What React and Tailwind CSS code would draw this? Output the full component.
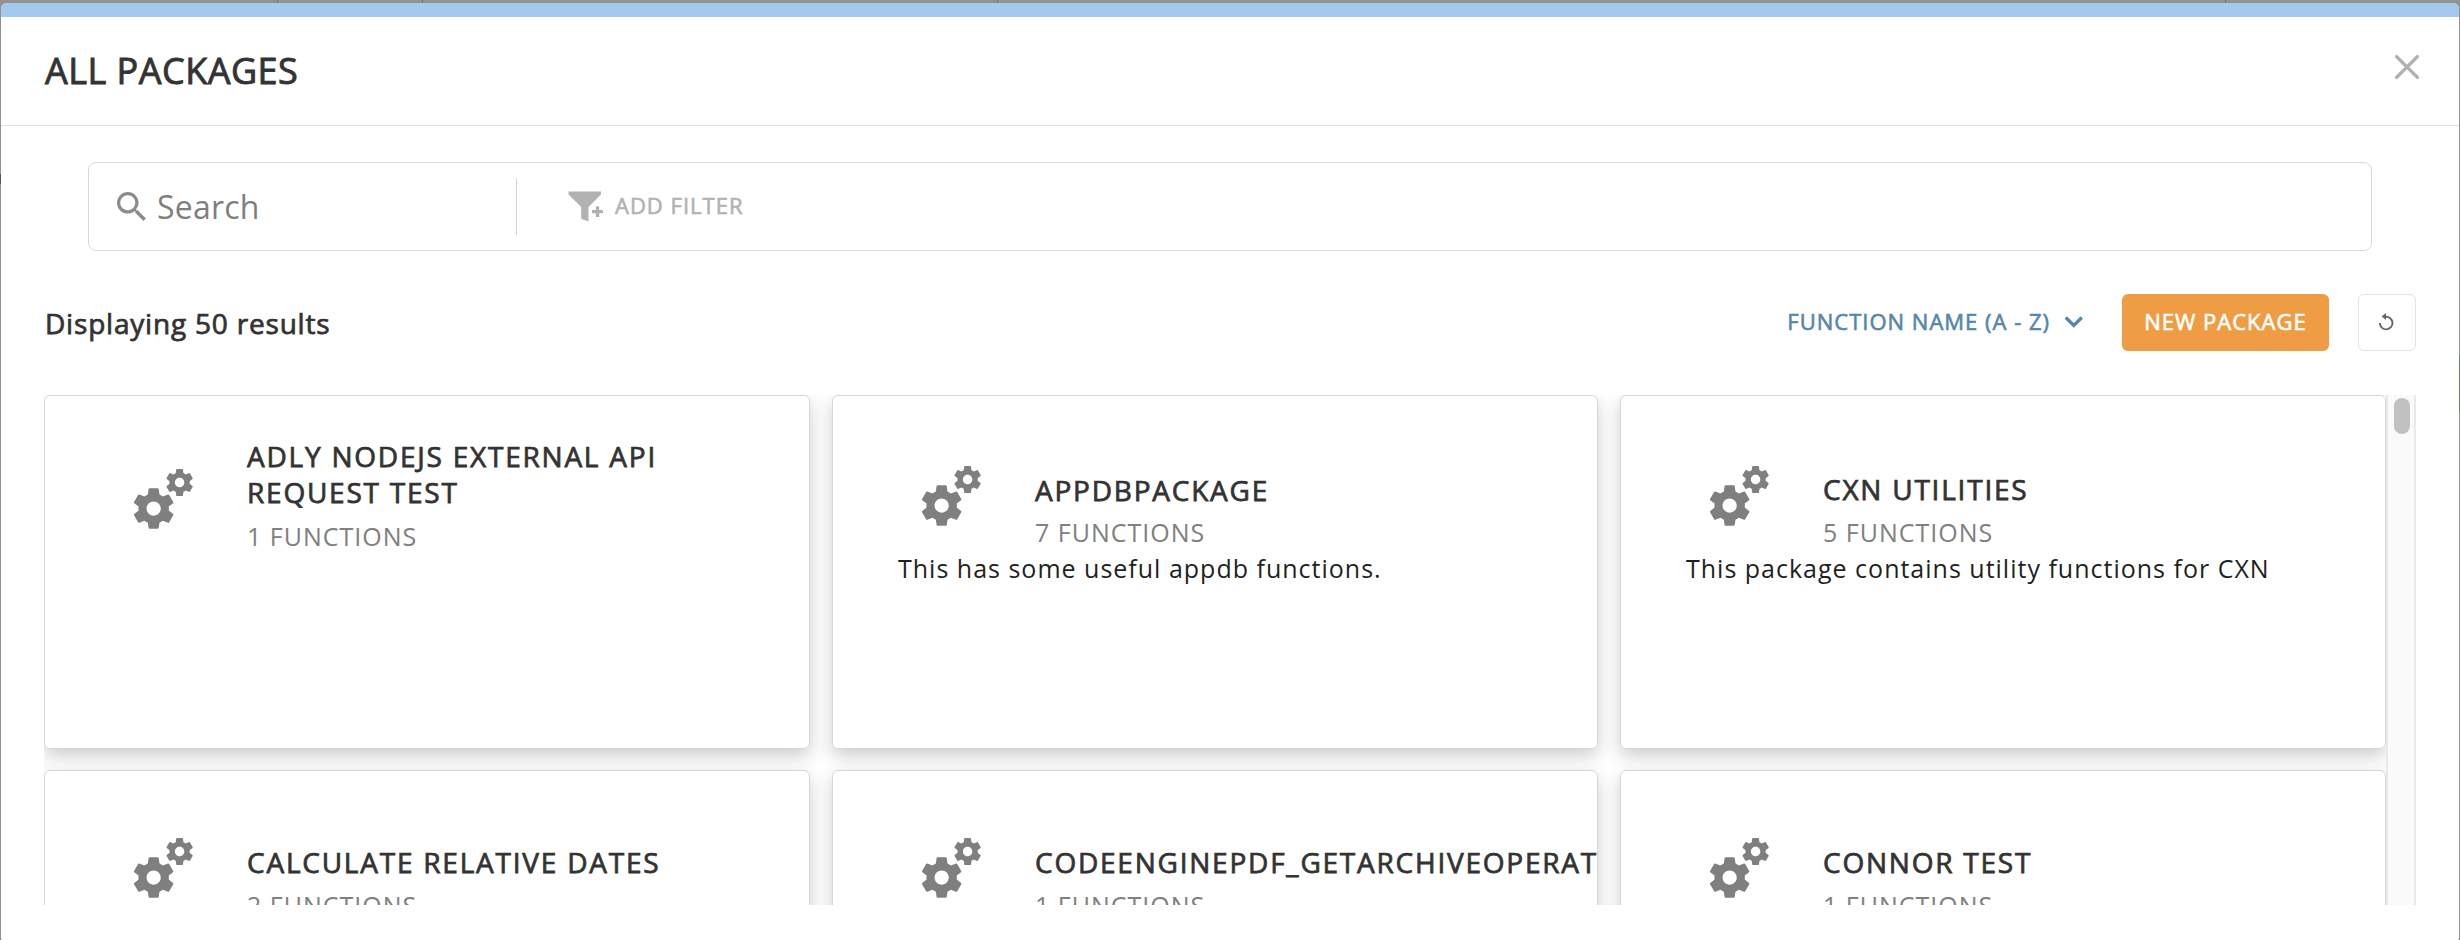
import React from "react";

const GEAR =
  "M19.43 12.98c.04-.32.07-.64.07-.98s-.03-.66-.07-.98l2.11-1.65c.19-.15.24-.42.12-.64l-2-3.46c-.12-.22-.39-.3-.61-.22l-2.49 1c-.52-.4-1.08-.73-1.69-.98l-.38-2.65C14.46 2.18 14.25 2 14 2h-4c-.25 0-.46.18-.49.42l-.38 2.65c-.61.25-1.17.59-1.69.98l-2.49-1c-.23-.09-.49 0-.61.22l-2 3.46c-.13.22-.07.49.12.64l2.11 1.65c-.04.32-.07.65-.07.98s.03.66.07.98l-2.11 1.65c-.19.15-.24.42-.12.64l2 3.46c.12.22.39.3.61.22l2.49-1c.52.4 1.08.73 1.69.98l.38 2.65c.03.24.24.42.49.42h4c.25 0 .46-.18.49-.42l.38-2.65c.61-.25 1.17-.59 1.69-.98l2.49 1c.23.09.49 0 .61-.22l2-3.46c.12-.22.07-.49-.12-.64l-2.11-1.65zM12 15.5c-1.93 0-3.5-1.57-3.5-3.5s1.57-3.5 3.5-3.5 3.5 1.57 3.5 3.5-1.57 3.5-3.5 3.5z";

const packages = [
  { name: "ADLY NODEJS EXTERNAL API REQUEST TEST", count: 1, icon: "pt-[73px]", text: "pt-[42px]", fn: "mt-[8px]" },
  { name: "APPDBPACKAGE", count: 7, desc: "This has some useful appdb functions.", icon: "pt-[70px]", text: "pt-[76px]", fn: "mt-[6px]" },
  { name: "CXN UTILITIES", count: 5, desc: "This package contains utility functions for CXN", icon: "pt-[70px]", text: "pt-[75px]", fn: "mt-[7px]" },
  { name: "CALCULATE RELATIVE DATES", count: 2, icon: "pt-[67px]", text: "pt-[73px]", fn: "mt-[7px]" },
  { name: "CODEENGINEPDF_GETARCHIVEOPERATIONS", count: 1, icon: "pt-[67px]", text: "pt-[73px]", fn: "mt-[7px]" },
  { name: "CONNOR TEST", count: 1, icon: "pt-[67px]", text: "pt-[73px]", fn: "mt-[7px]" },
];

function Gears() {
  return (
    <svg width="62" height="62" viewBox="0 0 62 62" className="block shrink-0 fill-[#7f7f7f]">
      <path d={GEAR} transform="translate(-3.7 15.2) scale(2.03)" />
      <path d={GEAR} transform="translate(30.4 -2.7) scale(1.35)" />
    </svg>
  );
}

function Card({ p }) {
  return (
    <div className="h-[354px] overflow-hidden rounded-md border border-[#d6d6d6] bg-white">
      <div className="flex pl-[88px]">
        <div className={"w-[114px] shrink-0 " + p.icon}>
          <Gears />
        </div>
        <div className={"min-w-0 grow " + p.text}>
          <div className="w-[480px] text-[28px] leading-[36px] tracking-[1.77px] text-[#333] [-webkit-text-stroke:0.75px_#333]">{p.name}</div>
          <div className={"text-[25px] leading-[36px] tracking-[1px] text-[#808080] " + p.fn}>{p.count} FUNCTIONS</div>
        </div>
      </div>
      {p.desc && <div className="pl-[65px] text-[25px] leading-[36px] tracking-[1px] text-[#1f1f1f]">{p.desc}</div>}
    </div>
  );
}

function Header() {
  return (
    <div className="flex h-[109px] items-center justify-between border-b border-[#e0e0e0] pr-[39px] pl-[44px]">
      <h1 className="text-[36px] leading-[48px] tracking-[0.48px] text-[#333] [-webkit-text-stroke:0.9px_#333]">ALL PACKAGES</h1>
      <svg width="26" height="26" viewBox="0 0 26 26" className="mb-[8px]">
        <path d="M2.6 2.6 23.4 23.4M23.4 2.6 2.6 23.4" stroke="#b0b0b0" strokeWidth="3.4" strokeLinecap="round" />
      </svg>
    </div>
  );
}

function SearchBar() {
  return (
    <div className="mx-[87px] mt-[36px] flex h-[89px] items-center rounded-lg border border-[#d9d9d9]">
      <div className="flex h-[57px] w-[428px] items-center border-r border-[#d2d2d2] pl-[28px]">
        <svg width="29" height="29" viewBox="3 3 17.5 17.5" className="fill-[#8c8c8c]">
          <path d="M15.5 14h-.79l-.28-.27A6.471 6.471 0 0 0 16 9.5 6.5 6.5 0 1 0 9.5 16c1.61 0 3.09-.59 4.23-1.57l.27.28v.79l5 4.99L20.49 19l-4.99-5zm-6 0C7.01 14 5 11.99 5 9.5S7.01 5 9.5 5 14 7.01 14 9.5 11.99 14 9.5 14z" />
        </svg>
        <span className="ml-[11px] text-[32px] leading-[44px] tracking-[0.2px] text-[#7f7f7f]">Search</span>
      </div>
      <div className="flex items-center pl-[51px]">
        <svg width="36" height="31" viewBox="0 0 36 31" className="fill-[#b2b2b2]">
          <path d="M.5.5H33V3.5L20.5 16V30.5L13.2 27.8V16L.5 3.5z" />
          <path d="M27.8 15.3h3.4v3.6H35v3.3h-3.8v3.8h-3.4v-3.8H24v-3.3h3.8z" />
        </svg>
        <span className="mb-[4px] ml-[11px] text-[22px] leading-[30px] tracking-[1px] text-[#b2b2b2] [-webkit-text-stroke:0.6px_#b2b2b2]">ADD FILTER</span>
      </div>
    </div>
  );
}

function Toolbar() {
  return (
    <div className="mt-[43px] flex h-[57px] items-center pr-[43px] pl-[44px]">
      <span className="grow text-[28px] leading-[38px] tracking-[0.8px] text-[#333] [-webkit-text-stroke:0.75px_#333]">Displaying 50 results</span>
      <span className="mb-[4px] text-[22px] leading-[30px] tracking-[1px] text-[#5586ad] [-webkit-text-stroke:0.6px_#5586ad]">FUNCTION NAME (A - Z)</span>
      <svg width="20" height="14" viewBox="0 0 20 14" className="mb-px ml-[14px] fill-none stroke-[#5586ad]">
        <path d="M1.8 2.5 9.8 10.5 17.8 2.5" strokeWidth="3.3" />
      </svg>
      <div className="ml-[38px] flex h-[57px] w-[207px] items-center justify-center rounded-md bg-[#ef9d45] pb-[3px] text-[22px] leading-[30px] tracking-[1px] whitespace-nowrap text-white [-webkit-text-stroke:0.6px_#fff]">
        NEW PACKAGE
      </div>
      <div className="ml-[29px] flex h-[57px] w-[58px] items-center justify-center rounded-md border border-[#e2e2e2]">
        <svg width="22" height="22" viewBox="0 0 22 22">
          <path d="M9.4 4.8A6.3 6.3 0 1 1 3.9 11" fill="none" stroke="#666" strokeWidth="1.9" />
          <path d="M5.6 4.5 10 .9V8.1z" fill="#666" />
        </svg>
      </div>
    </div>
  );
}

export default function App() {
  return (
    <div className="h-[940px] w-[2460px] overflow-hidden bg-[#929292] font-['Open_Sans',sans-serif]">
      <div className="flex h-[3px]">
        <div className="w-[278px] border-r border-[#777]" />
        <div className="w-[145px] border-r border-[#777]" />
        <div className="w-[575px] border-r border-[#777]" />
        <div className="w-[1228px] border-r border-[#777]" />
      </div>
      <div className="flex">
        <div className="w-px shrink-0 pt-[171px]">
          <div className="h-[10px] bg-[#555]" />
        </div>
        <div className="flex h-[940px] grow flex-col overflow-hidden rounded-md bg-white">
          <div className="h-[14px] shrink-0 bg-[#a3caec]" />
          <Header />
          <SearchBar />
          <Toolbar />
          <div className="mt-[44px] ml-[43px] flex h-[510px] w-[2372px] overflow-hidden">
            <div className="grid w-[2342px] grid-cols-3 content-start gap-x-[22px] gap-y-[21px] overflow-hidden">
              {packages.map((p) => (
                <div key={p.name} className="rounded-md shadow-[0_7px_18px_rgba(0,0,0,0.2)]">
                  <Card p={p} />
                </div>
              ))}
            </div>
            <div className="flex w-[30px] border-r-2 border-l-2 border-[#e9e9e9] bg-[#fafafa] pt-[3px] pl-[6px]">
              <div className="h-[36px] w-[16px] rounded-full bg-[#c1c1c1]" />
            </div>
          </div>
        </div>
        <div className="w-px shrink-0 pt-[352px]">
          <div className="h-[57px] bg-[#6d8551]" />
        </div>
      </div>
    </div>
  );
}
